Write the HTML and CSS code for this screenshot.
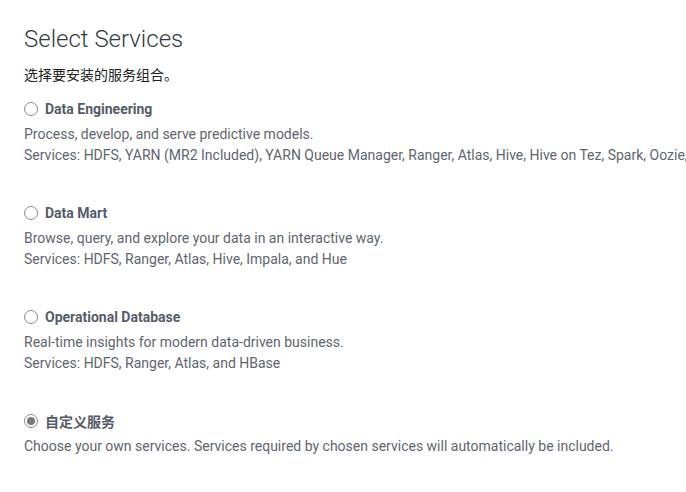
FILE: index.html
```html
<!DOCTYPE html>
<html lang="zh">
<head>
<meta charset="utf-8">
<link rel="stylesheet" href="styles.css">
</head>
<body>
<div class="page">
  <h1 class="title">Select Services</h1>
  <p class="subtitle">选择要安装的服务组合。</p>
  <div class="options">
    <div class="option">
      <label class="opt-label"><span class="radio"></span><span class="opt-name">Data Engineering</span></label>
      <div class="opt-desc">
        <div>Process, develop, and serve predictive models.</div>
        <div>Services: HDFS, YARN (MR2 Included), YARN Queue Manager, Ranger, Atlas, Hive, Hive on Tez, Spark, Oozie, Hue, and Data Analytics Studio</div>
      </div>
    </div>
    <div class="option">
      <label class="opt-label"><span class="radio"></span><span class="opt-name">Data Mart</span></label>
      <div class="opt-desc">
        <div>Browse, query, and explore your data in an interactive way.</div>
        <div>Services: HDFS, Ranger, Atlas, Hive, Impala, and Hue</div>
      </div>
    </div>
    <div class="option">
      <label class="opt-label"><span class="radio"></span><span class="opt-name">Operational Database</span></label>
      <div class="opt-desc">
        <div>Real-time insights for modern data-driven business.</div>
        <div>Services: HDFS, Ranger, Atlas, and HBase</div>
      </div>
    </div>
    <div class="option">
      <label class="opt-label"><span class="radio checked"></span><span class="opt-name">自定义服务</span></label>
      <div class="opt-desc">
        <div>Choose your own services. Services required by chosen services will automatically be included.</div>
      </div>
    </div>
  </div>
</div>
</body>
</html>
```

FILE: styles.css
```css
html, body {
  margin: 0;
  padding: 0;
  background: #ffffff;
  overflow: hidden;
}
body {
  font-family: Roboto, "Noto Sans CJK SC", sans-serif;
  color: #5f6570;
  width: 686px;
  height: 492px;
}
.page {
  padding: 24px 0 0 24px;
  white-space: nowrap;
}
.title {
  margin: 0;
  font-size: 24px;
  font-weight: 300;
  line-height: 30px;
  color: #333a42;
}
.subtitle {
  margin: 11px 0 0;
  font-size: 14px;
  line-height: 20px;
  color: #222;
}
.options {
  margin-top: 14px;
  display: flex;
  flex-direction: column;
}
.option {
  height: 104px;
}
.opt-label {
  display: flex;
  align-items: center;
  gap: 7px;
  height: 20px;
}
.radio {
  width: 12px;
  height: 12px;
  border: 1px solid #8a8a8a;
  border-radius: 50%;
  background: #fff;
  position: relative;
  flex: none;
}
.radio.checked::after {
  content: "";
  position: absolute;
  left: 2px;
  top: 2px;
  width: 8px;
  height: 8px;
  border-radius: 50%;
  background: #7a7a7a;
}
.opt-name {
  font-size: 14px;
  font-weight: 700;
  color: #555c69;
}
.opt-desc {
  margin-top: 5px;
  font-size: 14px;
  line-height: 21px;
  color: #5f6570;
}
```
